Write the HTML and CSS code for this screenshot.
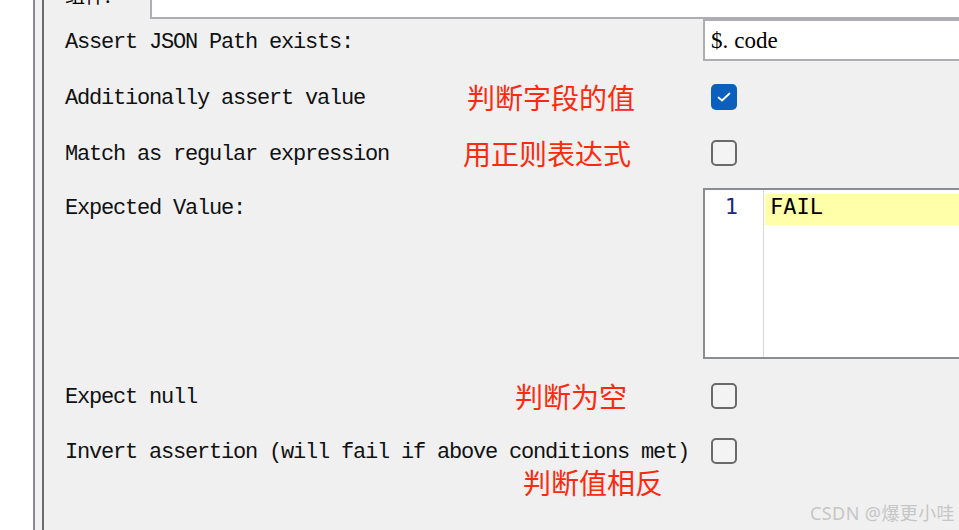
FILE: index.html
```html
<!DOCTYPE html>
<html lang="zh">
<head>
<meta charset="utf-8">
<title>JSON Assertion</title>
<link rel="stylesheet" href="styles.css">
</head>
<body>
<div class="app">
  <div class="outer-white"></div>
  <div class="frame">
    <div class="panel">
      <div class="header">
        <div class="tab"><span class="tab-label">组件:</span></div>
        <div class="tab-rest"></div>
      </div>

      <div class="row row-input">
        <div class="label">Assert JSON Path exists:</div>
        <div class="note"></div>
        <div class="control"><div class="text-input">$<span class="dot">.</span>code</div></div>
      </div>

      <div class="row row-std row-2">
        <div class="label">Additionally assert value</div>
        <div class="note note-a">判断字段的值</div>
        <div class="control">
          <span class="checkbox checked">
            <svg width="26" height="26" viewBox="0 0 26 26"><polyline points="7.5,13.5 11,16.5 18.5,9.5" fill="none" stroke="#fff" stroke-width="1.8" stroke-linecap="round" stroke-linejoin="round"/></svg>
          </span>
        </div>
      </div>

      <div class="row row-std">
        <div class="label">Match as regular expression</div>
        <div class="note note-b">用正则表达式</div>
        <div class="control"><span class="checkbox"></span></div>
      </div>

      <div class="row row-area">
        <div class="label label-top">Expected Value:</div>
        <div class="note"></div>
        <div class="control">
          <div class="editor">
            <div class="gutter"><span class="lineno">1</span></div>
            <div class="code">
              <div class="code-line">FAIL</div>
            </div>
          </div>
        </div>
      </div>

      <div class="row row-std row-5">
        <div class="label">Expect null</div>
        <div class="note note-c">判断为空</div>
        <div class="control"><span class="checkbox"></span></div>
      </div>

      <div class="row row-6">
        <div class="label">Invert assertion (will fail if above conditions met)</div>
        <div class="control"><span class="checkbox"></span></div>
      </div>

      <div class="row row-7">
        <div class="label"></div>
        <div class="note note-d">判断值相反</div>
      </div>
    </div>
  </div>
  <div class="watermark">CSDN @爆更小哇</div>
</div>
</body>
</html>
```

FILE: styles.css
```css
html, body {
  margin: 0;
  padding: 0;
  background: #ffffff;
  overflow: hidden;
}

.app {
  position: relative;
  display: flex;
  width: 959px;
  height: 530px;
  overflow: hidden;
}

.outer-white {
  width: 33px;
  flex: none;
  background: #ffffff;
}

.frame {
  flex: 1;
  display: flex;
  border-left: 2px solid #8b8c93;
  padding-left: 7px;
  background: #f0f0f0;
}

.panel {
  flex: 1;
  display: flex;
  flex-direction: column;
  border-left: 2px solid #6d6d6d;
  background: #f0f0f0;
  min-width: 0;
}

.header {
  display: flex;
  height: 19px;
  flex: none;
}

.tab {
  width: 106px;
  flex: none;
  overflow: hidden;
  padding-left: 21px;
  box-sizing: border-box;
}

.tab-label {
  display: block;
  margin-top: -16px;
  font-family: "Noto Sans CJK SC", sans-serif;
  font-size: 20px;
  line-height: 22px;
  color: #000;
}

.tab-rest {
  flex: 1;
  background: #ffffff;
  border-left: 2px solid #adadb3;
  border-bottom: 2px solid #adadb3;
}

.row {
  display: grid;
  grid-template-columns: 400px 238px 1fr;
  padding-left: 21px;
  align-items: center;
  flex: none;
}

.label {
  font-family: "Liberation Mono", monospace;
  font-size: 22px;
  letter-spacing: -1.2px;
  color: #111;
  white-space: nowrap;
  padding-top: 2px;
}

.note {
  font-family: "Noto Sans CJK SC", sans-serif;
  font-size: 28px;
  line-height: 30px;
  color: #fd2a0e;
  white-space: nowrap;
}

.note-a { padding-left: 2px; }
.note-b { margin-left: -2px; }
.note-c { padding-left: 50px; }
.note-d { padding-left: 58px; }

.control {
  display: flex;
  align-items: center;
  padding-left: 8px;
}

.row-input {
  height: 42px;
}

.row-input .label {
  padding-top: 4px;
}

.row-input .control {
  padding-left: 0;
}

.text-input {
  width: 300px;
  height: 42px;
  box-sizing: border-box;
  border: 2px solid #adadb3;
  background: #ffffff;
  font-family: "Liberation Serif", serif;
  font-size: 23px;
  line-height: 40px;
  padding-left: 6px;
  color: #000;
}

.dot {
  margin-right: 6px;
}

.row-std {
  height: 56px;
}

.row-2 {
  margin-top: 8px;
}

.checkbox {
  display: block;
  width: 26px;
  height: 26px;
  box-sizing: border-box;
  border: 2px solid #6a6a6a;
  border-radius: 5px;
  background: #f3f3f3;
}

.checkbox.checked {
  border: none;
  background: #0b5fbd;
}

.checkbox svg {
  display: block;
}

.row-area {
  margin-top: 7px;
  height: 171px;
  align-items: start;
}

.row-area .label-top {
  padding-top: 0;
  margin-top: 8px;
}

.row-area .control {
  padding-left: 0;
}

.editor {
  display: flex;
  width: 300px;
  height: 171px;
  box-sizing: border-box;
  border: 2px solid #8a8d93;
  background: #ffffff;
}

.gutter {
  width: 58px;
  flex: none;
  border-right: 1px solid #d9d9d9;
  text-align: right;
  padding-top: 4px;
}

.lineno {
  display: block;
  padding-right: 25px;
  font-family: "DejaVu Sans Mono", monospace;
  font-size: 22px;
  line-height: 25px;
  color: #1b2a7c;
}

.code {
  flex: 1;
  padding-top: 4px;
  padding-left: 1px;
}

.code-line {
  height: 31px;
  box-sizing: border-box;
  background: #ffffaa;
  padding-left: 5px;
  font-family: "DejaVu Sans Mono", monospace;
  font-size: 22px;
  line-height: 25px;
  color: #000;
}

.row-5 {
  margin-top: 9px;
}

.row-6 {
  height: 44px;
  margin-top: 5px;
  grid-template-columns: 638px 1fr;
}

.row-7 {
  margin-top: -6px;
}

.watermark {
  position: absolute;
  right: 4px;
  bottom: 6px;
  font-family: "Noto Sans", "Noto Sans CJK SC", sans-serif;
  font-size: 18px;
  line-height: 22px;
  letter-spacing: 0.4px;
  color: #c6c6c6;
  white-space: nowrap;
}
```
